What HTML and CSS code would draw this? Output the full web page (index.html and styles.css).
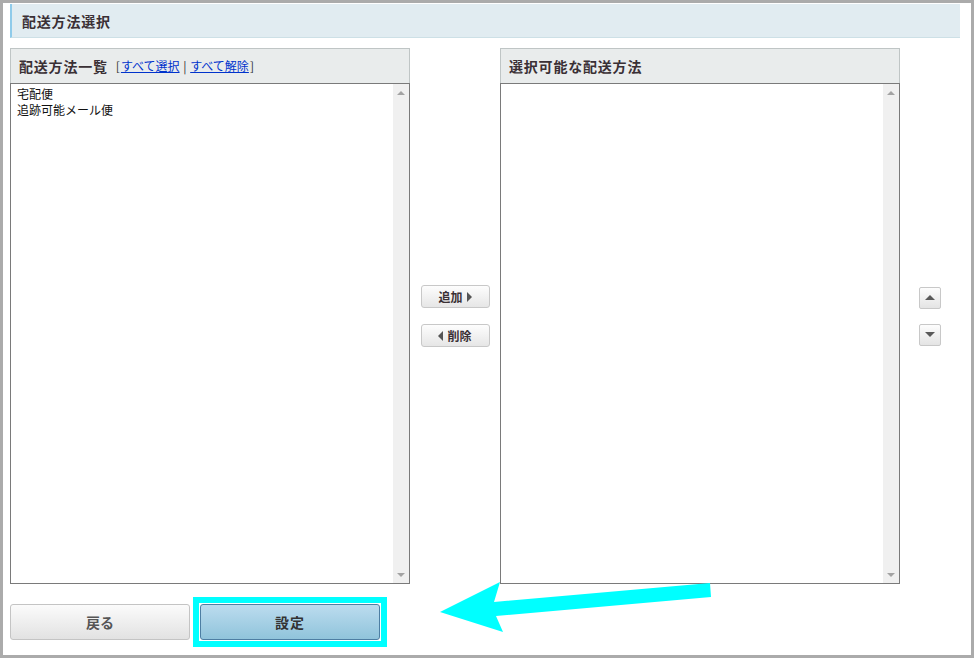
FILE: index.html
```html
<!DOCTYPE html>
<html lang="ja">
<head>
<meta charset="utf-8">
<title>配送方法選択</title>
<link rel="stylesheet" href="styles.css">
</head>
<body>
<div class="frame">
  <div class="titlebar"><h1 class="title">配送方法選択</h1></div>
  <div class="main">
    <div class="panel">
      <div class="panel-head">
        <span class="head-title">配送方法一覧</span>
        <span class="head-links">[<a href="#">すべて選択</a> | <a href="#">すべて解除</a>]</span>
      </div>
      <div class="listbox">
        <div class="list-items">
          <div class="item">宅配便</div>
          <div class="item">追跡可能メール便</div>
        </div>
        <div class="scrollbar"><span class="sb-up"></span><span class="sb-down"></span></div>
      </div>
    </div>
    <div class="mid">
      <button class="mv-btn" type="button">追加<span class="tri-right"></span></button>
      <button class="mv-btn" type="button"><span class="tri-left"></span>削除</button>
    </div>
    <div class="panel">
      <div class="panel-head">
        <span class="head-title">選択可能な配送方法</span>
      </div>
      <div class="listbox">
        <div class="list-items"></div>
        <div class="scrollbar"><span class="sb-up"></span><span class="sb-down"></span></div>
      </div>
    </div>
    <div class="updown">
      <button class="ud-btn" type="button"><span class="tri-up"></span></button>
      <button class="ud-btn" type="button"><span class="tri-down"></span></button>
    </div>
  </div>
  <div class="footer">
    <button class="foot-btn back" type="button">戻る</button>
    <button class="foot-btn primary" type="button">設定</button>
  </div>
</div>
<svg class="annot-arrow" width="974" height="658" viewBox="0 0 974 658" aria-hidden="true">
  <polygon points="440,612 500,582 494,602 710,583 711,597 496,616 503,632" fill="#00ffff"/>
</svg>
</body>
</html>
```

FILE: styles.css
```css
* { box-sizing: border-box; }
html, body { margin: 0; padding: 0; background: #fff; }
body {
  position: relative;
  width: 974px;
  height: 658px;
  font-family: "Noto Sans CJK JP", "Noto Sans", sans-serif;
  color: #333;
}
.frame {
  width: 974px;
  height: 658px;
  border: 3px solid #ababab;
  padding: 1px 11px 0 7px;
  display: flex;
  flex-direction: column;
}
.titlebar {
  height: 34px;
  background: #e1ecf1;
  border-left: 2px solid #8fcbea;
  border-bottom: 1px solid #cde0e6;
  display: flex;
  align-items: center;
  padding-left: 10px;
  flex: none;
}
.title {
  margin: 0;
  font-size: 14px;
  font-weight: bold;
  letter-spacing: 0.8px;
  color: #3a3035;
  line-height: 1;
}
.main {
  margin-top: 10px;
  height: 536px;
  display: flex;
  flex: none;
}
.panel {
  width: 400px;
  display: flex;
  flex-direction: column;
  flex: none;
}
.panel-head {
  height: 35px;
  background: #e9ecec;
  border: 1px solid #bfc5c5;
  border-bottom: none;
  display: flex;
  align-items: center;
  padding-left: 8px;
  flex: none;
}
.head-title {
  font-size: 14px;
  font-weight: bold;
  letter-spacing: 0.8px;
  color: #3a3035;
  line-height: 1;
}
.head-links {
  margin-left: 8px;
  font-size: 12px;
  color: #333;
  line-height: 1;
}
.head-links a {
  color: #0033cc;
  text-decoration: underline;
  margin: 0 1px;
}
.listbox {
  flex: 1;
  border: 1px solid #7a7a7a;
  display: flex;
  background: #fff;
}
.list-items {
  flex: 1;
  padding: 2px 6px;
}
.item {
  font-size: 12px;
  line-height: 16px;
  color: #111;
}
.scrollbar {
  width: 16px;
  background: #f0f0f0;
  display: flex;
  flex-direction: column;
  justify-content: space-between;
  align-items: center;
  padding: 7px 0 6px;
}
.sb-up {
  width: 0; height: 0;
  border-left: 4px solid transparent;
  border-right: 4px solid transparent;
  border-bottom: 4px solid #a3a3a3;
}
.sb-down {
  width: 0; height: 0;
  border-left: 4px solid transparent;
  border-right: 4px solid transparent;
  border-top: 4px solid #a3a3a3;
}
.mid {
  width: 90px;
  flex: none;
  display: flex;
  flex-direction: column;
  align-items: center;
  justify-content: center;
  gap: 16px;
}
.mv-btn {
  width: 69px;
  height: 23px;
  border: 1px solid #c8c8c8;
  border-radius: 3px;
  background: linear-gradient(#fdfdfd, #e6e6e6);
  font-family: inherit;
  font-size: 12px;
  font-weight: bold;
  color: #3a3035;
  display: flex;
  align-items: center;
  justify-content: center;
  gap: 4px;
  padding: 0;
  line-height: 1;
}
.tri-right {
  width: 0; height: 0;
  border-top: 5px solid transparent;
  border-bottom: 5px solid transparent;
  border-left: 5px solid #555;
}
.tri-left {
  width: 0; height: 0;
  border-top: 5px solid transparent;
  border-bottom: 5px solid transparent;
  border-right: 5px solid #555;
}
.updown {
  width: 60px;
  flex: none;
  display: flex;
  flex-direction: column;
  align-items: center;
  justify-content: center;
  gap: 15px;
}
.ud-btn {
  width: 22px;
  height: 22px;
  border: 1px solid #c8c8c8;
  border-radius: 2px;
  background: linear-gradient(#fdfdfd, #e4e4e4);
  display: flex;
  align-items: center;
  justify-content: center;
  padding: 0;
}
.tri-up {
  width: 0; height: 0;
  border-left: 5px solid transparent;
  border-right: 5px solid transparent;
  border-bottom: 5px solid #5a5a5a;
}
.tri-down {
  width: 0; height: 0;
  border-left: 5px solid transparent;
  border-right: 5px solid transparent;
  border-top: 5px solid #5a5a5a;
}
.footer {
  margin-top: 20px;
  display: flex;
  gap: 10px;
  flex: none;
}
.foot-btn {
  width: 180px;
  height: 36px;
  border-radius: 3px;
  font-family: inherit;
  font-size: 14px;
  font-weight: bold;
  padding: 0;
  line-height: 1;
}
.back {
  border: 1px solid #c4c4c4;
  background: linear-gradient(#fbfbfb, #e2e2e2);
  color: #555;
}
.primary {
  position: relative;
  border: 1px solid #4d7ea3;
  background: linear-gradient(#bcdcef, #90c4db);
  color: #333;
  letter-spacing: 1px;
}
.primary::after {
  content: "";
  position: absolute;
  left: -8px;
  top: -8px;
  right: -8px;
  bottom: -8px;
  border: 6px solid #00ffff;
  pointer-events: none;
}
.annot-arrow {
  position: absolute;
  left: 0;
  top: 0;
  pointer-events: none;
}
```
